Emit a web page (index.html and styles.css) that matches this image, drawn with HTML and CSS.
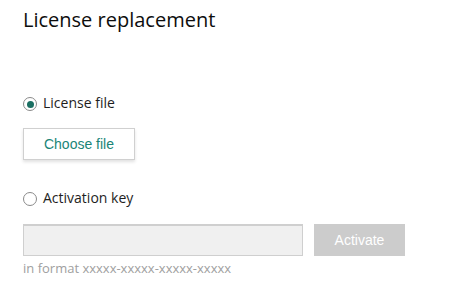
FILE: index.html
```html
<!DOCTYPE html>
<html>
<head>
<meta charset="utf-8">
<link rel="stylesheet" href="styles.css">
</head>
<body>
<div class="page">
  <h1 class="title">License replacement</h1>
  <label class="radio-row first">
    <span class="radio checked"><span class="dot"></span></span>
    <span class="radio-label">License file</span>
  </label>
  <button class="choose-btn">Choose file</button>
  <label class="radio-row second">
    <span class="radio"></span>
    <span class="radio-label">Activation key</span>
  </label>
  <div class="key-row">
    <div class="key-input"></div>
    <button class="activate-btn">Activate</button>
  </div>
  <div class="hint">in format xxxxx-xxxxx-xxxxx-xxxxx</div>
</div>
</body>
</html>
```
FILE: styles.css
```css
html, body { margin: 0; padding: 0; background: #fff; }
body { font-family: "Open Sans", "Noto Sans", sans-serif; color: #222; }
.page { padding: 8px 23px; display: flex; flex-direction: column; align-items: flex-start; }
.title { margin: 0; font-size: 20px; font-weight: 500; color: #0d0d0d; line-height: 24px; }
.radio-row { display: flex; align-items: center; gap: 6px; font-size: 14px; line-height: 20px; }
.radio-row.first { margin-top: 61px; }
.radio-row.second { margin-top: 28px; }
.radio { width: 12px; height: 12px; border: 1px solid #8a8a8a; border-radius: 50%; display: flex; align-items: center; justify-content: center; background: #fff; flex: none; margin-top: 2px; }
.dot { width: 7px; height: 7px; border-radius: 50%; background: #1a6f62; }
.radio-label { color: #1e1e1e; }
.choose-btn { margin-top: 15px; width: 112px; height: 32px; border: 1px solid #d0d0d0; background: #fff; box-shadow: 0 2px 3px rgba(0,0,0,0.12); font-family: "Liberation Sans", Arial, sans-serif; font-size: 14px; color: #1a8577; padding: 0; }
.key-row { margin-top: 16px; display: flex; gap: 11px; }
.key-input { background: #f0f0f0; border: 1px solid #cfcfcf; border-top: 2px solid #cfcfcf; box-sizing: border-box; height: 32px; width: 280px; }
.activate-btn { width: 91px; height: 32px; border: none; background: #cccccc; color: #fff; font-family: "Liberation Sans", Arial, sans-serif; font-size: 14px; padding: 0; }
.hint { margin-top: 4px; font-size: 13px; color: #a0a0a0; line-height: 16px; }
```
